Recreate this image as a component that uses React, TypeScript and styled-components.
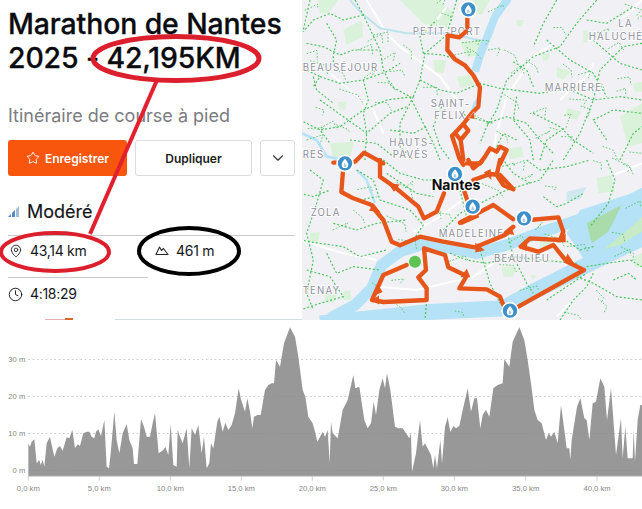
import React from "react";
import styled, { createGlobalStyle } from "styled-components";
import { Star, MapPin, Clock, ChevronDown } from "lucide-react";

const Global = createGlobalStyle`
  html, body { margin: 0; padding: 0; background: #fff; }
  body { font-family: Inter, "Liberation Sans", sans-serif; overflow: hidden; }
`;
const Page = styled.div`position: relative; width: 642px; height: 509px; overflow: hidden; background: #fff;`;
const Top = styled.div`display: flex; height: 320px;`;
const Panel = styled.section`width: 302px; flex: none; box-sizing: border-box; padding: 7px 7px 0 8px; background: #fff; color: #14161a;`;
const Title = styled.h1`margin: 0; font-size: 28.4px; line-height: 34px; font-weight: 500; letter-spacing: -0.1px; color: #0b0c10; white-space: nowrap; -webkit-text-stroke: 0.3px #0b0c10;`;
const Subtitle = styled.p`margin: 29px 0 0; font-size: 18px; line-height: 24px; color: #7b7c80;`;
const Actions = styled.div`display: flex; gap: 8px; margin-top: 12px;`;
const BaseButton = styled.button`
  height: 36px; box-sizing: border-box; border-radius: 3px; font-family: inherit;
  font-size: 12px; font-weight: 600; display: flex; align-items: center; justify-content: center; padding: 0;
`;
const PrimaryButton = styled(BaseButton)`width: 119px; gap: 5px; background: #f8560c; border: none; color: #fff;`;
const SecondaryButton = styled(BaseButton)`width: 117px; background: #fff; border: 1px solid #dcdcdc; color: #1b1c20;`;
const IconButton = styled(BaseButton)`width: 35px; background: #fff; border: 1px solid #dcdcdc; color: #33343a;`;
const Level = styled.div`display: flex; align-items: center; gap: 7px; margin-top: 22px; height: 27px; font-size: 18px; color: #14161a; -webkit-text-stroke: 0.15px #14161a;`;
const Stats = styled.div`display: grid; grid-template-columns: 140px 1fr; margin-top: 10px; border-top: 1px solid #c9c9c9;`;
const Stat = styled.div<{ $ruled?: boolean; $shift?: number; $top?: number }>`
  display: flex; align-items: flex-start; align-self: start; gap: 7px; height: 42px; box-sizing: border-box;
  font-size: 14px; line-height: 20px; font-weight: 400; letter-spacing: -0.3px; color: #16171b;
  padding: ${(p) => p.$top ?? 5}px 0 0 ${(p) => p.$shift ?? 0}px;
  ${(p) => (p.$ruled ? "border-bottom: 1px solid #c9c9c9;" : "")}
  & > svg { margin-top: 3px; }
`;
const MapPane = styled.div`flex: 1; height: 320px; background: #f1f1f5;`;
const MapSvg = styled.svg`display: block; width: 340px; height: 320px;`;
const ChartSvg = styled.svg`display: block; width: 642px; height: 189px;`;
const Overlay = styled.svg`position: absolute; left: 0; top: 0; width: 642px; height: 509px; pointer-events: none;`;
const MapLabel = styled.text`
  font-family: Inter, "Liberation Sans", sans-serif; font-size: 29px; letter-spacing: 3.5px; fill: #8e8e9a;
  paint-order: stroke; stroke: #fff; stroke-width: 5px;
`;
const CityLabel = styled.text`
  font-family: Inter, "Liberation Sans", sans-serif; font-size: 42px; font-weight: 700; fill: #0c0c0c;
  paint-order: stroke; stroke: #fff; stroke-width: 7px;
`;
const AxisLabel = styled.text`font-family: "Liberation Sans", Arial, sans-serif; font-size: 23px; fill: #858585;`;

const left: number[][] = [[85,370],[90,380],[95,365],[103,358],[110,430],[118,420],[122,435],[128,420],[133,440],[140,370],[150,350],[155,375],[163,410],[172,385],[180,378],[188,392],[200,352],[208,355],[217,330],[225,385],[233,373],[240,378],[250,340],[260,335],[268,335],[275,350],[283,355],[288,335],[295,328],[303,348],[313,300],[320,440],[327,445],[332,400],[343,275],[350,360],[358,400],[368,340],[380,312],[388,360],[398,385],[402,432],[412,432],[423,298],[432,320],[440,350],[450,350],[458,310],[465,280],[476,400],[490,390],[496,380],[505,405],[512,312],[520,435],[530,440],[533,330],[540,350],[548,370],[560,325],[568,445],[575,325],[585,345],[595,315],[605,400],[612,350],[620,445],[628,430],[633,370],[640,385],[652,305],[658,290],[668,335],[676,308],[685,330],[695,315],[705,280],[716,205],[722,235],[735,275],[742,235],[750,275],[757,325],[762,290],[772,285],[782,285],[795,210],[805,195],[815,190],[822,190],[828,120],[840,140],[852,70],[870,22],[885,50],[895,110],[908,210],[916,230],[925,290],[938,310],[945,335],[952,365],[963,345]];
const right: number[][] = [[5,335],[12,350],[20,330],[26,430],[30,305],[35,340],[50,355],[65,270],[80,240],[97,165],[103,205],[115,200],[130,300],[140,325],[150,310],[158,245],[165,285],[175,210],[185,175],[192,205],[198,160],[208,210],[222,320],[232,325],[245,325],[265,355],[270,340],[273,455],[285,400],[297,300],[305,380],[312,370],[330,405],[337,445],[342,405],[348,445],[358,360],[363,430],[372,320],[380,292],[388,335],[398,318],[405,325],[415,318],[423,280],[440,205],[450,275],[460,235],[468,235],[478,325],[485,285],[495,270],[505,290],[517,205],[523,200],[530,195],[545,190],[550,118],[565,140],[575,65],[595,22],[610,60],[620,120],[632,205],[640,270],[650,300],[662,310],[675,360],[683,340],[690,350],[700,335],[710,370],[720,255],[730,330],[737,385],[745,385],[748,420],[752,360],[768,260],[778,235],[790,295],[797,300],[805,360],[815,250],[825,245],[838,175],[850,200],[858,300],[870,205],[885,405],[900,295],[905,415],[913,320],[920,415],[935,415],[938,330],[942,425],[950,300],[958,255],[963,255]];
const area = [...left, ...right.map(([x, y]) => [x + 963, y])];
const areaPath = `M85,468 L${area.map((p) => p.join(",")).join(" L")} L1926,468 Z`;

const yTicks = [["30 m", 118], ["20 m", 229], ["10 m", 340], ["0 m", 451]] as const;
const xTicks = [["0,0 km", 85], ["5,0 km", 298], ["10,0 km", 511], ["15,0 km", 724], ["20,0 km", 937], ["25,0 km", 1150], ["30,0 km", 1363], ["35,0 km", 1577], ["40,0 km", 1791]] as const;

const parks = [
  "M300,0 L420,0 L460,40 L440,85 L370,70 Z", "M130,90 L185,60 L190,110 L140,135 Z", "M55,0 L115,0 L85,40 L60,40 Z",
  "M480,125 L550,120 L545,165 L500,170 Z", "M520,0 L570,0 L545,45 L525,40 Z", "M960,350 L1026,310 L1026,430 L985,440 Z",
  "M800,325 L845,335 L830,360 L800,350 Z", "M115,305 L140,305 L135,330 L115,325 Z", "M1000,250 L1026,245 L1026,275 L1005,275 Z",
  "M90,430 L160,425 L150,480 L100,480 Z", "M650,60 L672,60 L665,80 L650,78 Z", "M725,165 L750,160 L745,180 L730,182 Z",
  "M620,445 L665,440 L670,470 L630,478 Z", "M470,230 L510,225 L520,255 L480,265 Z",
  "M400,180 L440,180 L430,220 L405,215 Z", "M770,200 L810,215 L790,240 L770,230 Z", "M850,90 L870,95 L860,130 L850,125 Z",
];
const parks4 = [
  "M890,55 L935,45 L945,95 L895,100 Z", "M30,220 L60,215 L55,250 L30,250 Z", "M130,395 L150,390 L155,420 L130,420 Z",
  "M605,320 L650,320 L640,350 L610,350 Z", "M720,240 L755,235 L750,265 L720,262 Z", "M75,400 L115,400 L100,430 L75,425 Z",
  "M690,345 L710,345 L700,360 Z", "M1000,290 L1026,280 L1026,320 L1005,320 Z",
];
const greens = [
  "M165,0 L190,45 L240,150 L250,210 L275,260 L330,290 L400,430 L420,480", "M190,45 L130,60 L90,40 L40,60 L10,95",
  "M470,0 L440,105 L375,160 L360,240 L340,290 L260,300 L190,330 L120,380 L60,390", "M20,130 L70,140 L120,165 L160,150 L240,150",
  "M60,230 L120,250 L190,240 L260,215 L300,190", "M30,0 L10,90", "M80,70 L110,120 L100,165 L100,200", "M190,240 L205,300 L190,340 L200,400 L195,480",
  "M370,160 L430,165 L470,180", "M360,240 L420,270 L470,280 L540,250 L600,265 L720,280 L800,265 L880,300 L960,290 L1026,300", "M640,185 L680,210 L700,260",
  "M890,0 L830,70 L780,140 L700,170 L620,240 L590,330 L560,380 L540,430", "M770,0 L730,70 L700,140", "M860,60 L920,70 L1000,20", "M1026,130 L970,140 L900,210 L880,300 L840,400 L790,480",
  "M880,120 L960,190 L1026,210", "M740,120 L810,180 L880,220 L920,290", "M650,290 L640,360 L690,420 L700,480", "M700,340 L780,380 L820,420 L880,460", "M560,370 L620,350 L680,370 L720,420 L760,460",
  "M340,290 L300,370 L300,440 L340,480", "M60,300 L130,350 L200,400 L270,340 L320,320", "M0,360 L60,390 L90,430", "M370,160 L360,110 L410,60", "M40,230 L50,270 L100,310",
  "M425,320 L400,380 L420,440 L450,480", "M920,420 L880,360 L940,330 L1026,340", "M960,480 L1000,400 L1026,380", "M720,480 L740,420 L800,380", "M0,200 L60,230 L40,260",
  "M590,440 L610,400 L650,420", "M270,390 L340,400 L380,380", "M150,420 L230,430 L280,470", "M480,340 L540,360 L580,370",
];
const greens4 = [
  "M30,30 L70,60 L50,130 L20,220 L40,300 L20,400 L40,450", "M170,30 L220,60 L240,120 L330,150 L370,195 L340,240", "M250,0 L300,40 L370,60 L420,60", "M100,190 L170,210 L230,190 L320,180",
  "M0,240 L60,250 L130,260 L180,290 L260,270", "M80,280 L110,340 L160,320 L240,330", "M20,330 L90,350 L130,410 L60,430 L0,450", "M380,420 L375,480", "M430,210 L480,160 L540,130 L620,90 L720,60 L760,0",
  "M620,210 L640,290 L680,370 L700,400", "M540,270 L570,370 L600,430", "M450,280 L500,300 L560,310 L640,290 L720,300 L830,310", "M920,0 L945,60 L925,130 L870,200",
  "M860,320 L920,310 L990,300 L1026,320", "M830,350 L880,370 L950,410 L1026,420", "M740,420 L800,380 L860,340", "M780,480 L820,420 L860,380 L880,340", "M690,70 L640,40 L610,0", "M730,110 L770,140 L800,130 L850,100", "M680,0 L720,30 L800,20 L870,0",
  "M940,360 L985,340 L1010,360", "M0,100 L40,110 L90,90", "M180,120 L230,110", "M260,40 L350,100 L400,110", "M480,90 L500,170", "M780,230 L840,270 L880,260",
];
// Short footpath stubs scattered over the land, seeded so every render gives the same map.
const stubs: string[] = (() => {
  let s = 7;
  const r = (n: number) => { s = (s * 1103515245 + 12345) % 2147483648; return (s / 2147483648) * n; };
  const out: string[] = [];
  for (let i = 0; i < 90; i++) {
    const x = 10 + r(1010); const y = r(950);
    const dx = 20 + r(35); const dy = r(50) - 25;
    out.push(`M${x.toFixed(0)},${y.toFixed(0)} l${dx.toFixed(0)},${dy.toFixed(0)} l${(r(30) - 15).toFixed(0)},${(10 + r(20)).toFixed(0)}`);
  }
  return out;
})();
const roads = ["M200,0 L260,100 L300,140 L420,230 L470,300", "M90,220 L220,330 L250,400", "M760,130 L700,170 L620,290 L590,400 L575,480", "M410,60 L440,20", "M1026,0 L960,60", "M780,300 L820,260 L860,230 L880,190"];
const roads4 = ["M0,240 L130,280 L230,300", "M240,380 L350,390 L520,350 L580,310", "M850,330 L940,280 L1026,240", "M940,45 L1026,10", "M340,215 L420,170 L500,110", "M770,470 L820,420"];

const routes3 = [
  "M502,30 L502,82", "M498,95 L478,112 L443,106 L442,150 L465,178 L495,196 L520,226 L540,262 L535,320 L515,340 L490,372 L456,408 L470,450 L478,475 L490,495",
  "M490,372 L505,392 L482,420 L470,405", "M482,420 L490,480", "M500,490 L540,490 L555,470 L570,445 L590,455 L600,440 L620,450 L600,492",
  "M100,488 L165,485 L192,458 L250,490",
];
const routes4: string[] = [
  "M240,0 L240,50 L285,82 L355,140 L372,175 L410,155 L432,100", "M130,20 L124,96 L160,115 L215,135 L225,150 L250,180 L275,245 L300,256 L360,230 L430,245 L525,262 L615,225 L640,200 L618,218",
  "M640,178 L580,135 L480,188", "M520,170 L482,188", "M490,85 L505,130", "M505,0 L520,25 L545,5", "M520,60 L570,42 L600,45 L640,88 L610,75 L590,45 L600,0", "M690,180 L775,172 L790,215 L780,240 L690,235 L662,260 L715,275 L760,255 L800,305 L852,330 L655,440",
  "M610,435 L600,410 L560,388 L478,385 L500,348 L445,322 L435,285 L372,265 L378,330 L355,352 L380,385 L380,420 L250,426 L216,420 L250,345 L320,315",
];
const arrows = ["M505,355 L522,335 L525,358 Z"];
const arrows4 = ["M268,72 L295,75 L282,92 Z", "M210,150 L238,155 L222,135 Z", "M528,252 L550,270 L528,275 Z", "M555,38 L570,30 L572,55 Z", "M222,405 L245,395 L232,375 Z", "M660,262 L680,250 L678,270 Z", "M795,305 L820,310 L803,285 Z", "M485,350 L508,350 L500,330 Z", "M220,420 L235,430 L235,410 Z", "M775,245 L795,225 L795,245 Z", "M612,220 L632,205 L640,222 Z"];

const Drop = ({ x, y }: { x: number; y: number }) => (
  <g transform={`translate(${x},${y})`}>
    <circle r="24" fill="#3c8fc8" stroke="#fff" strokeWidth="5" />
    <path d="M0,-14 C5,-7 10,-3 10,4 A10,10 0 0 1 -10,4 C-10,-3 -5,-7 0,-14 Z" fill="#fff" />
    <path d="M-1,-2 C2,2 4,4 4,7 A4,4 0 0 1 -4,7 C-4,4 -3,2 -1,-2 Z" fill="#3c8fc8" opacity="0.45" />
  </g>
);

const RouteMap = () => (
  <MapSvg viewBox="6 0 1020 960" aria-label="Carte de l'itinéraire">
    <rect x="6" y="0" width="1020" height="960" fill="#f1f1f5" />
    {parks.map((d) => <path key={d} d={d} fill="#daf1da" />)}
    <g transform="translate(0,480)">{parks4.map((d) => <path key={d} d={d} fill="#daf1da" />)}</g>
    {roads.map((d) => <path key={d} d={d} fill="none" stroke="#fff" strokeWidth="6" />)}
    <g transform="translate(0,480)">{roads4.map((d) => <path key={d} d={d} fill="none" stroke="#fff" strokeWidth="6" />)}</g>
    <path d="M625,-5 L585,50 L562,110 L540,165 L525,215" fill="none" stroke="#b5e2f6" strokeWidth="24" />
    <path d="M150,0 L185,40 L240,85 L320,100 L440,100 L560,125" fill="none" stroke="#bfe3ee" strokeWidth="6" />
    <path d="M515,340 L525,310 L540,290" fill="none" stroke="#b5e2f6" strokeWidth="10" />
    <path d="M6,400 L50,420 L80,470 L135,480" fill="none" stroke="#b5e2f6" strokeWidth="8" />
    <g transform="translate(0,480)">
      <path d="M170,30 L200,60 L225,130" fill="none" stroke="#b5e2f6" strokeWidth="7" />
      <path d="M1040,95 L960,135 L820,185 L700,225 L620,255 L530,280 L440,262 L370,252 L300,275 L245,315 L215,385 L165,435 L90,475" fill="none" stroke="#b5e2f6" strokeWidth="34" strokeLinejoin="round" />
      <path d="M1040,228 L860,315 L700,395 L610,445 L400,455 L60,490" fill="none" stroke="#b5e2f6" strokeWidth="48" strokeLinejoin="round" />
      <path d="M840,150 L1026,90 L1026,230 L860,310 L800,220 Z" fill="#b5e2f6" />
      <path d="M860,190 L965,135 L925,215 L875,250 Z" fill="#a9dcaa" />
      <path d="M912,268 L1000,195 L1026,170 L1026,215 L960,255 Z" fill="#c6ebc6" />
      <path d="M800,95 L860,80 L840,118 L800,125 Z" fill="#cfe9ee" />
    </g>
    {greens.map((d) => <path key={d} d={d} fill="none" stroke="#46c35a" strokeWidth="3.5" strokeDasharray="6 6" />)}
    <g transform="translate(0,480)">{greens4.map((d) => <path key={d} d={d} fill="none" stroke="#46c35a" strokeWidth="3.5" strokeDasharray="6 6" />)}</g>
    {stubs.map((d) => <path key={d} d={d} fill="none" stroke="#46c35a" strokeWidth="3" strokeDasharray="5 5" opacity="0.85" />)}
    <MapLabel x="338" y="104">PETIT-PORT</MapLabel>
    <MapLabel x="955" y="82">LA</MapLabel>
    <MapLabel x="866" y="120" letterSpacing="2.5">HALUCHÈ</MapLabel>
    <MapLabel x="8" y="212">BEAUSÉJOUR</MapLabel>
    <MapLabel x="734" y="272">MARRIÈRE</MapLabel>
    <MapLabel x="392" y="322">SAINT-</MapLabel>
    <MapLabel x="403" y="358">FÉLIX</MapLabel>
    <MapLabel x="268" y="438">HAUTS-</MapLabel>
    <MapLabel x="278" y="473">PAVÉS</MapLabel>
    <MapLabel x="8" y="473">RES</MapLabel>
    <g>
      {routes3.map((d) => <path key={d} d={d} fill="none" stroke="#e6551a" strokeWidth="13" strokeLinejoin="round" strokeLinecap="round" />)}
      {arrows.map((d) => <path key={d} d={d} fill="#e6551a" stroke="#fff" strokeWidth="1.5" />)}
    </g>
    <g transform="translate(0,480)">
      <MapLabel x="32" y="167">ZOLA</MapLabel>
      <MapLabel x="416" y="230">MADELEINE</MapLabel>
      <MapLabel x="582" y="307">BEAULIEU</MapLabel>
      <MapLabel x="8" y="402">TENAY</MapLabel>
      {routes4.map((d) => <path key={d} d={d} fill="none" stroke="#e6551a" strokeWidth="13" strokeLinejoin="round" strokeLinecap="round" />)}
      <path d="M595,45 L640,88 L612,78 Z" fill="#dba35a" stroke="#e6551a" strokeWidth="9" />
      <path d="M482,188 L535,165" stroke="#e6551a" strokeWidth="15" />
      {arrows4.map((d) => <path key={d} d={d} fill="#e6551a" stroke="#e6551a" strokeWidth="4" />)}
      <circle cx="345" cy="305" r="18" fill="#5cc552" />
      <CityLabel x="395" y="90">Nantes</CityLabel>
      <Drop x={465} y={42} />
      <Drop x={518} y={140} />
      <Drop x={672} y={175} />
      <Drop x={630} y={452} />
      <Drop x={135} y={10} />
    </g>
    <Drop x={505} y={28} />
  </MapSvg>
);

const Elevation = () => (
  <ChartSvg viewBox="0 0 1926 567" aria-label="Profil d'altitude">
    <path d={areaPath} fill="#989898" />
    {yTicks.map(([t, y]) => (
      <g key={t}>
        <line x1="85" x2="1926" y1={y} y2={y} stroke="#8d8d8d" strokeWidth="2" strokeDasharray="5 8" opacity="0.8" />
        <AxisLabel x="76" y={y + 7} textAnchor="end">{t}</AxisLabel>
      </g>
    ))}
    <line x1="85" x2="1926" y1="469" y2="469" stroke="#cfcfcf" strokeWidth="3" />
    {xTicks.map(([t, x]) => (
      <g key={t}>
        <line x1={x} x2={x} y1="468" y2="482" stroke="#bbb" strokeWidth="2" />
        <AxisLabel x={x} y="512" textAnchor="middle">{t}</AxisLabel>
      </g>
    ))}
  </ChartSvg>
);

const Mountain = () => (
  <svg width="14" height="12" viewBox="0 0 14 12" fill="none" stroke="#2a2b30" strokeWidth="1.1" strokeLinejoin="round">
    <path d="M1,10.5 L4.5,3 L6.5,6.5 L8.5,4.5 L13,10.5 Z" />
  </svg>
);
const LevelIcon = () => (
  <svg width="12" height="12" viewBox="0 0 12 12">
    <path d="M0,11 L3,8 L3,11 Z" fill="#4f86c6" />
    <path d="M4,7 L7,4 L7,11 L4,11 Z" fill="#4f86c6" />
    <path d="M8,3 L11,0 L11,11 L8,11 Z" fill="#a6bdd6" />
  </svg>
);

export default function App() {
  return (
    <Page>
      <Global />
      <Top>
        <Panel>
          <Title>Marathon de Nantes<br />2025 - 42,195KM</Title>
          <Subtitle>Itinéraire de course à pied</Subtitle>
          <Actions>
            <PrimaryButton><Star size={14} strokeWidth={1.6} />Enregistrer</PrimaryButton>
            <SecondaryButton>Dupliquer</SecondaryButton>
            <IconButton><ChevronDown size={18} strokeWidth={1.5} /></IconButton>
          </Actions>
          <Level><LevelIcon />Modéré</Level>
          <Stats>
            <Stat $ruled $shift={1}><MapPin size={14} strokeWidth={1.5} />43,14 km</Stat>
            <Stat $shift={7}><Mountain />461 m</Stat>
            <Stat $top={6}><Clock size={15} strokeWidth={1.5} />4:18:29</Stat>
          </Stats>
        </Panel>
        <MapPane><RouteMap /></MapPane>
      </Top>
      <Elevation />
      <Overlay viewBox="0 0 642 509">
        <ellipse cx="176" cy="58.5" rx="83" ry="22" fill="none" stroke="#dc1f2d" strokeWidth="5" />
        <path d="M157,80 L90,234" stroke="#e2202e" strokeWidth="4" />
        <ellipse cx="55" cy="252" rx="54" ry="19" fill="none" stroke="#dc1f2d" strokeWidth="4" />
        <ellipse cx="189" cy="251" rx="50" ry="23" fill="none" stroke="#000" strokeWidth="4" />
        <rect x="45" y="319" width="20" height="1" fill="#e8b4ae" />
        <rect x="65" y="318" width="8" height="2" fill="#d8692c" />
        <rect x="115" y="319" width="187" height="1" fill="#d3dde0" />
      </Overlay>
    </Page>
  );
}
